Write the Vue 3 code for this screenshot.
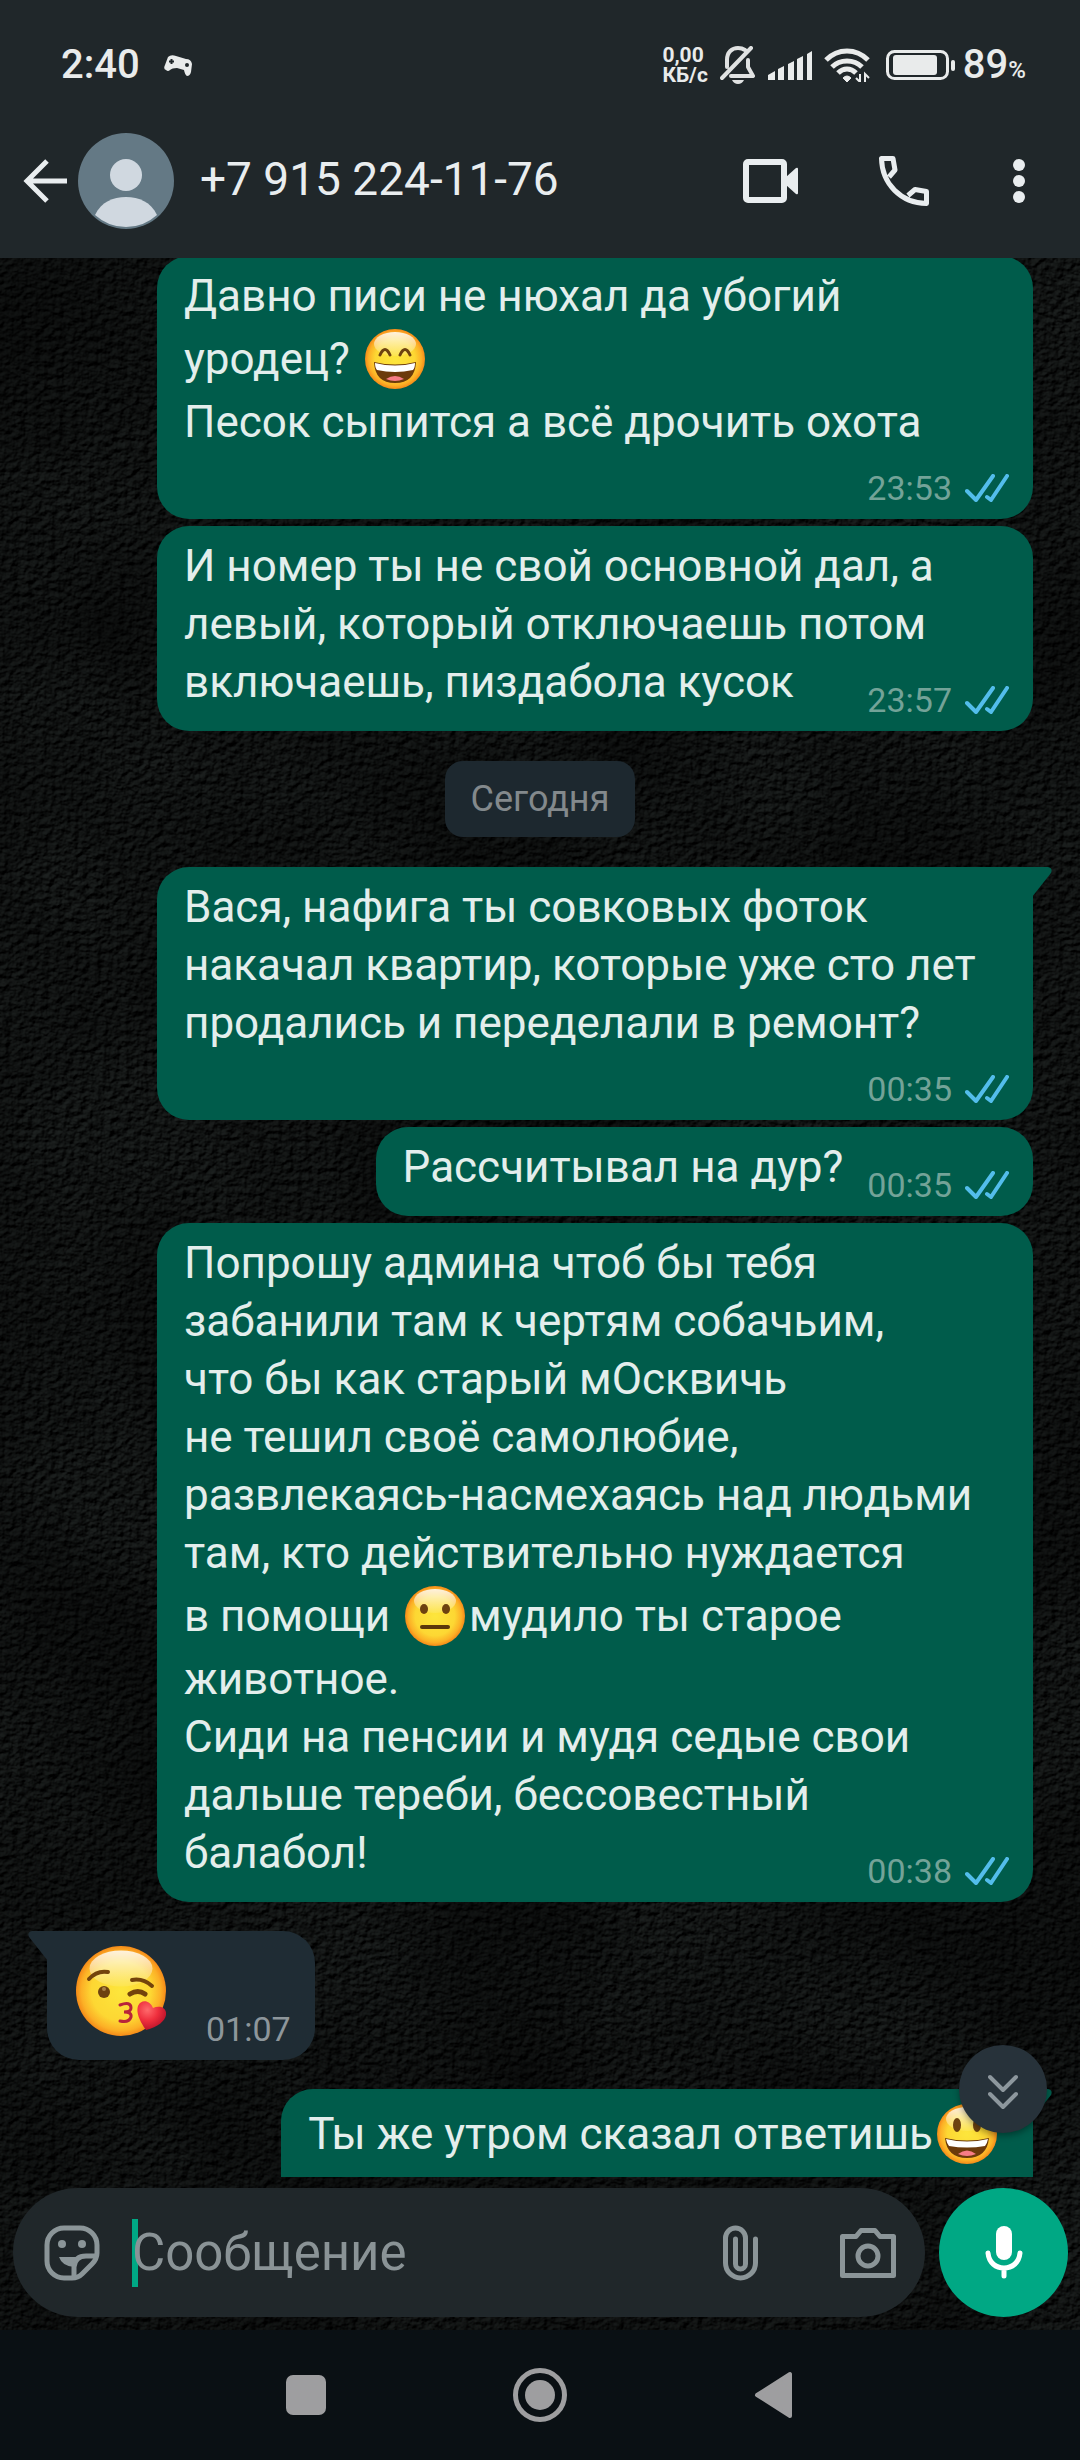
<script setup>
import { ref } from 'vue'

const draft = ref('')

const messages = [
  {
    id: 1,
    wide: true,
    stacked: true,
    time: '23:53',
    lines: [
      ['Давно писи не нюхал да убогий'],
      ['уродец? ', { emoji: 'grin' }],
      ['Песок сыпится а всё дрочить охота'],
    ],
  },
  {
    id: 2,
    wide: true,
    time: '23:57',
    lines: [
      ['И номер ты не свой основной дал, а'],
      ['левый, который отключаешь потом'],
      ['включаешь, пиздабола кусок'],
    ],
  },
  { id: 3, date: 'Сегодня' },
  {
    id: 4,
    wide: true,
    stacked: true,
    tail: true,
    time: '00:35',
    lines: [
      ['Вася, нафига ты совковых фоток'],
      ['накачал квартир, которые уже сто лет'],
      ['продались и переделали в ремонт?'],
    ],
  },
  { id: 5, row: true, time: '00:35', lines: [['Рассчитывал на дур?']] },
  {
    id: 6,
    wide: true,
    time: '00:38',
    lines: [
      ['Попрошу админа чтоб бы тебя'],
      ['забанили там к чертям собачьим,'],
      ['что бы как старый мОсквичь'],
      ['не тешил своё самолюбие,'],
      ['развлекаясь-насмехаясь над людьми'],
      ['там, кто действительно нуждается'],
      ['в помощи ', { emoji: 'neutral' }, 'мудило ты старое'],
      ['животное.'],
      ['Сиди на пенсии и мудя седые свои'],
      ['дальше тереби, бессовестный'],
      ['балабол!'],
    ],
  },
  { id: 7, incoming: true, tail: true, row: true, time: '01:07', lines: [[{ emoji: 'kiss' }]] },
  {
    id: 8,
    tail: true,
    stacked: true,
    lines: [['Ты же утром сказал ответишь', { emoji: 'happy' }]],
  },
]
</script>

<template>
  <div class="phone">
    <svg class="defs" aria-hidden="true">
      <defs>
        <radialGradient id="face" cx="50%" cy="50%" r="50%">
          <stop offset="0" stop-color="#fde63c" />
          <stop offset="0.66" stop-color="#fdd733" />
          <stop offset="0.88" stop-color="#fcb026" />
          <stop offset="1" stop-color="#f58a18" />
        </radialGradient>
        <linearGradient id="shine" x1="0" y1="0" x2="0" y2="1">
          <stop offset="0" stop-color="#fff" stop-opacity="0.85" />
          <stop offset="1" stop-color="#fff" stop-opacity="0.1" />
        </linearGradient>
        <radialGradient id="heart" cx="35%" cy="30%" r="75%">
          <stop offset="0" stop-color="#ff6a6c" />
          <stop offset="0.5" stop-color="#ef2f3d" />
          <stop offset="1" stop-color="#b50f28" />
        </radialGradient>
        <symbol id="emoji-base" viewBox="0 0 60 60">
          <circle cx="30" cy="30" r="30" fill="url(#face)" />
          <ellipse cx="30" cy="15" rx="21" ry="12" fill="url(#shine)" />
        </symbol>
        <symbol id="emoji-grin" viewBox="0 0 60 60">
          <use href="#emoji-base" />
          <path d="M15 26q5-11 10 0M35 26q5-11 10 0" fill="none" stroke="#6d4210" stroke-width="3" stroke-linecap="round" />
          <path d="M9 33q21 5 42 0q-1 21-21 21T9 33z" fill="#6b3a0b" />
          <path d="M10 34q20 5 40 0q0 5-2 7q-18 4-36 0q-2-2-2-7z" fill="#fff" />
          <path d="M21 50q9-6 18 0q-9 4-18 0z" fill="#f67c86" />
        </symbol>
        <symbol id="emoji-happy" viewBox="0 0 60 60">
          <use href="#emoji-base" />
          <ellipse cx="20" cy="21" rx="4" ry="7" fill="#6d4210" />
          <ellipse cx="40" cy="21" rx="4" ry="7" fill="#6d4210" />
          <path d="M8 34q22 5 44 0q-2 20-22 20T8 34z" fill="#6b3a0b" />
          <path d="M9 35q21 5 42 0q-1 5-3 7q-18 3-36 0q-2-2-3-7z" fill="#fff" />
          <path d="M21 50q9-7 18 0q-9 4-18 0z" fill="#f67c86" />
        </symbol>
        <symbol id="emoji-neutral" viewBox="0 0 60 60">
          <use href="#emoji-base" />
          <ellipse cx="19" cy="23" rx="4" ry="5" fill="#6d4210" />
          <ellipse cx="41" cy="23" rx="4" ry="5" fill="#6d4210" />
          <rect x="15" y="39" width="30" height="4" rx="2" fill="#5c380b" />
        </symbol>
        <symbol id="emoji-kiss" viewBox="0 0 90 90">
          <use href="#emoji-base" width="90" height="90" />
          <g fill="none" stroke="#73430c" stroke-linecap="round" stroke-width="4">
            <path d="M13 33q8-9 19-7" />
            <path d="M56 34q11-2 20 6" />
            <path d="M54 48q8-5 15 0" stroke-width="5" />
          </g>
          <circle cx="28" cy="46" r="6" fill="#6d4210" />
          <circle cx="28" cy="43" r="2" fill="#a98147" />
          <path d="M44 59q11-4 11 3q0 4-7 4q8 0 7 5q-2 6-11 4" fill="none" stroke="#b8243a" stroke-width="3" stroke-linecap="round" />
          <path d="M70 84C63 74 60 66 62 60c3-7 12-6 15 2c7-3 14 0 13 7c-1 6-8 12-20 15z" fill="url(#heart)" />
        </symbol>
      </defs>
    </svg>

    <header class="top">
      <div class="status">
        <span class="clock">2:40</span>
        <svg class="pad" width="28" height="21" viewBox="0 0 28 21">
          <path d="M4 2Q7-1 12 1l10 3q5 0 6 5l-1 8q-1 4-4 4q-2-1-3-6l-7-2q-5 0-7 2q-2 2-4 0q-3-1-1-5z" fill="#e9ebeb" />
          <path d="M7.500 4v5M5 6.500h5" stroke="#20272a" stroke-width="2" />
          <circle cx="23" cy="10" r="2" fill="#20272a" />
        </svg>
        <span class="speed"><span>0,00</span><span>КБ/с</span></span>
        <svg class="bell" width="36" height="38" viewBox="0 0 36 38" fill="none" stroke="#e0e2e2" stroke-width="4" stroke-linecap="round" stroke-linejoin="round">
          <path d="M2 32L31 2M7 21v-7C7 6 12 2 18 2q4 0 7 2M28 14v7l5 9H11" />
          <path d="M12 34h12q-2 4-6 4t-6-4z" fill="#e0e2e2" stroke="none" />
        </svg>
        <svg class="signal" width="44" height="29" viewBox="0 0 44 29" fill="#e9ebeb">
          <path d="M0 29v-5l7-4v9zM10 29V18l6-3v14zM20 29V13l6-3v19zM29 29V8l6-3v24zM39 29V3l5-3v29z" />
        </svg>
        <svg class="wifi" width="46" height="34" viewBox="0 0 46 34" fill="none" stroke="#e9ebeb" stroke-width="5">
          <path d="M2 12q9-9 21-9t21 9M8 19q6-6 15-6t15 6M14 25q4-4 9-4t9 4" />
          <path d="M19 30q4-4 8 0l-4 4z" fill="#e9ebeb" stroke-width="1" />
          <path d="M36 26v8l-4-4M41 34v-8l4 4" stroke-width="2" />
        </svg>
        <svg class="battery" width="69" height="30" viewBox="0 0 69 30">
          <rect x="1.500" y="1.500" width="60" height="27" rx="7" fill="none" stroke="#e9ebeb" stroke-width="3" />
          <rect x="7" y="5" width="44" height="20" rx="3" fill="#e9ebeb" />
          <rect x="65" y="10" width="4" height="11" rx="2" fill="#e9ebeb" />
        </svg>
        <span class="charge">89<small>%</small></span>
      </div>

      <div class="bar">
        <button class="icon back" aria-label="Назад">
          <svg width="44" height="44" viewBox="0 0 44 44" fill="none" stroke="#e9edef" stroke-width="5">
            <path d="M24 2L4 22l20 20M3 22h41" />
          </svg>
        </button>
        <svg class="avatar" width="96" height="96" viewBox="0 0 96 96">
          <circle cx="48" cy="48" r="48" fill="#647985" />
          <circle cx="48" cy="42" r="16" fill="#d0d8e0" />
          <path d="M17 82c6-13 18-18 31-18s25 5 31 18a46 46 0 0 1-62 0z" fill="#d0d8e0" />
        </svg>
        <h1 class="title">+7 915 224-11-76</h1>
        <button class="icon video" aria-label="Видеозвонок">
          <svg width="56" height="44" viewBox="0 0 56 44">
            <rect x="3" y="3" width="38" height="38" rx="2" fill="none" stroke="#e9edef" stroke-width="6" />
            <path d="M43 18l10-9q2-1 2 1v24q0 2-2 1l-10-9z" fill="#e9edef" />
          </svg>
        </button>
        <button class="icon call" aria-label="Позвонить">
          <svg width="50" height="50" viewBox="0 0 50 50" fill="none" stroke="#e9edef" stroke-width="5" stroke-linejoin="round">
            <path d="M10 21l6-7-2-11.500H2.500C3 28 22 47 47.500 47.500V35.500L36 33.500l-7 6" />
          </svg>
        </button>
        <button class="icon more" aria-label="Ещё">
          <svg width="12" height="44" viewBox="0 0 12 44" fill="#e9edef">
            <circle cx="6" cy="6" r="6" /><circle cx="6" cy="22" r="6" /><circle cx="6" cy="38" r="6" />
          </svg>
        </button>
      </div>
    </header>

    <main class="chat">
      <svg class="wallpaper" aria-hidden="true">
        <filter id="stone" x="0" y="0" width="100%" height="100%" color-interpolation-filters="sRGB">
          <feTurbulence type="fractalNoise" baseFrequency="0.13 0.16" numOctaves="5" seed="23" result="grain" />
          <feDiffuseLighting in="grain" surfaceScale="3" diffuseConstant="1" lighting-color="#1e2221" result="lit">
            <feDistantLight azimuth="235" elevation="34" />
          </feDiffuseLighting>
          <feTurbulence type="fractalNoise" baseFrequency="0.005" numOctaves="4" seed="4" result="clouds" />
          <feColorMatrix in="clouds" type="matrix" values="0 0 0 0 0  0 0 0 0 0  0 0 0 0 0  0.8 0 0 0 -0.2" result="shade" />
          <feMerge>
            <feMergeNode in="lit" />
            <feMergeNode in="shade" />
          </feMerge>
        </filter>
        <rect width="100%" height="100%" filter="url(#stone)" />
      </svg>

      <section class="messages">
        <template v-for="m in messages" :key="m.id">
          <time v-if="m.date" class="date">{{ m.date }}</time>
          <article
            v-else
            class="bubble"
            :class="{ wide: m.wide, row: m.row, incoming: m.incoming, tailed: m.tail, stacked: m.stacked }"
          >
            <svg v-if="m.tail" class="tail" width="20" height="30" viewBox="0 0 20 30">
              <path d="M0 0h16q5 1 3 6L0 30z" />
            </svg>
            <div class="text">
              <p v-for="(line, i) in m.lines" :key="i" class="line">
                <template v-for="(part, j) in line" :key="j">
                  <svg v-if="part.emoji" class="emoji" :class="part.emoji"><use :href="'#emoji-' + part.emoji" /></svg>
                  <span v-else>{{ part }}</span>
                </template>
              </p>
            </div>
            <div class="meta">
              <time v-if="m.time">{{ m.time }}</time>
              <svg v-if="m.time && !m.incoming" width="44" height="28" viewBox="0 0 44 28" fill="none" stroke="#53bdeb" stroke-width="4" stroke-linecap="round" stroke-linejoin="round">
                <path d="M2 17l9 9L28 2M22 23l4 3L42 2" />
              </svg>
            </div>
          </article>
        </template>
      </section>

      <form class="composer" @submit.prevent>
        <button type="button" class="jump" aria-label="Вниз">
          <svg width="30" height="36" viewBox="0 0 30 36" fill="none" stroke="#8d979d" stroke-width="4" stroke-linecap="round" stroke-linejoin="round">
            <path d="M2 3l13 13L28 3M2 20l13 13 13-13" />
          </svg>
        </button>
        <div class="field">
          <button type="button" class="icon" aria-label="Стикеры">
            <svg width="56" height="56" viewBox="0 0 56 56" fill="none" stroke="#8b9598" stroke-width="5">
              <path d="M20 3h16a17 17 0 0 1 17 17v8q0 6-5 11L38 49q-4 4-10 4h-8A17 17 0 0 1 3 36V20A17 17 0 0 1 20 3z" />
              <path d="M30 53V42q1-11 12-11h11" />
              <path d="M15 32h23q-8 3-8 10q-12-1-15-10z" fill="#8b9598" stroke="none" />
              <circle cx="18" cy="19" r="4" fill="#8b9598" stroke="none" />
              <circle cx="38" cy="19" r="4" fill="#8b9598" stroke="none" />
            </svg>
          </button>
          <span class="caret"></span>
          <input v-model="draft" type="text" placeholder="Сообщение" aria-label="Сообщение" />
          <button type="button" class="icon clip" aria-label="Прикрепить">
            <svg width="35" height="56" viewBox="0 0 35 56" fill="none" stroke="#8b9598" stroke-width="5" stroke-linecap="round">
              <path d="M32.500 14v24a15 15 0 0 1-30 0V13a10 10 0 0 1 20 0v26a5 5 0 0 1-10 0V14" />
            </svg>
          </button>
          <button type="button" class="icon" aria-label="Камера">
            <svg width="56" height="50" viewBox="0 0 56 50" fill="none" stroke="#8b9598" stroke-width="5" stroke-linejoin="round">
              <path d="M2.500 8.500H16l5-6h14l5 6h13.500v39h-51z" />
              <circle cx="28" cy="28" r="10" />
            </svg>
          </button>
        </div>
        <button type="button" class="mic" aria-label="Голосовое сообщение">
          <svg width="38" height="53" viewBox="0 0 38 53">
            <rect x="11" width="16" height="34" rx="8" fill="#fff" />
            <path d="M3 27c1 10 8 15 16 15s15-5 16-15M19 42v8" fill="none" stroke="#fff" stroke-width="5" stroke-linecap="round" />
          </svg>
        </button>
      </form>
    </main>

    <nav class="system">
      <button class="icon" aria-label="Недавние">
        <svg width="54" height="54" viewBox="0 0 54 54" fill="#9e9ea0"><rect x="7" y="7" width="40" height="40" rx="7" /></svg>
      </button>
      <button class="icon" aria-label="Домой">
        <svg width="54" height="54" viewBox="0 0 54 54"><circle cx="27" cy="27" r="24.500" fill="none" stroke="#9e9ea0" stroke-width="5" /><circle cx="27" cy="27" r="15" fill="#9e9ea0" /></svg>
      </button>
      <button class="icon" aria-label="Назад">
        <svg width="54" height="54" viewBox="0 0 54 54" fill="#9e9ea0" stroke="#9e9ea0" stroke-width="4" stroke-linejoin="round"><path d="M10 27l33-21v42z" /></svg>
      </button>
    </nav>
  </div>
</template>

<style>
body {
  margin: 0;
  background: #0a1014;
}
</style>

<style scoped>
.phone {
  display: flex;
  flex-direction: column;
  height: 100vh;
  font-family: Roboto, "Noto Sans", sans-serif;
  color: #e9edef;
}
.phone * {
  box-sizing: border-box;
}
.phone svg {
  display: block;
  flex: none;
}
.phone .defs {
  position: absolute;
  width: 0;
  height: 0;
}
.icon,
.mic,
.jump {
  display: grid;
  place-items: center;
  flex: none;
  padding: 0;
  border: 0;
  background: none;
}

.top {
  flex: none;
  background: #20272a;
}
.status {
  display: flex;
  align-items: center;
  height: 128px;
  padding: 2px 54px 0 61px;
  color: #e9ebeb;
}
.clock,
.charge {
  font-size: 40px;
  line-height: 48px;
  font-weight: 500;
}
.pad {
  margin: 0 auto 0 24px;
}
.speed {
  display: flex;
  flex-direction: column;
  font-size: 21px;
  line-height: 20px;
  font-weight: 700;
}
.bell {
  margin-left: 12px;
}
.signal {
  margin-left: 12px;
}
.wifi {
  margin-left: 12px;
}
.battery {
  margin: 0 8px 0 16px;
}
.charge small {
  font-size: 24px;
  line-height: 24px;
}
.bar {
  display: flex;
  align-items: center;
  height: 130px;
  padding: 0 55px 24px 23px;
}
.avatar {
  margin-left: 11px;
}
.title {
  flex: 1;
  margin: 0 0 4px 26px;
  font-size: 46px;
  line-height: 58px;
  font-weight: 400;
}
.call {
  margin-left: 80px;
}
.more {
  margin-left: 84px;
}

.chat {
  position: relative;
  display: flex;
  flex: 1;
  flex-direction: column;
  min-height: 0;
  background: #0d100f;
}
.phone .wallpaper {
  position: absolute;
  inset: 0;
  width: 100%;
  height: 100%;
}
.messages {
  position: relative;
  display: flex;
  flex: 1;
  flex-direction: column;
  align-items: flex-end;
  min-height: 0;
  margin-top: -2px;
  padding: 0 47px;
  overflow: hidden;
  clip-path: inset(2px 0 0 0);
}
.bubble {
  position: relative;
  flex: none;
  margin-bottom: 7px;
  padding: 11px 24px 11px 27px;
  border-radius: 32px;
  background: #005c4b;
}
.wide {
  width: calc(100% - 110px);
}
.tailed {
  margin-top: 22px;
  border-top-right-radius: 0;
}
.tail {
  position: absolute;
  top: 0;
  left: 100%;
  margin-left: -1px;
  fill: #005c4b;
}
.incoming {
  align-self: flex-start;
  border-radius: 0 32px 32px 32px;
  background: #1f2c34;
}
.incoming .tail {
  right: 100%;
  left: auto;
  margin: 0 -1px 0 0;
  fill: #1f2c34;
  transform: scaleX(-1);
}
.line {
  display: flex;
  align-items: center;
  margin: 0;
  color: #e3eeec;
  font-size: 44px;
  line-height: 58px;
  white-space: pre;
}
.emoji {
  width: 60px;
  height: 60px;
  margin: 4px;
}
.emoji:last-child {
  margin-right: 12px;
}
.emoji.kiss {
  width: 90px;
  height: 90px;
  margin: 4px 2px;
}
.meta {
  display: flex;
  align-items: center;
  justify-content: flex-end;
  gap: 13px;
  height: 40px;
  margin-top: -31px;
  color: #73a398;
  font-size: 34px;
  line-height: 40px;
}
.stacked .meta {
  margin-top: 17px;
}
.row {
  display: flex;
  align-items: flex-end;
  gap: 24px;
}
.row .text {
  margin-bottom: 9px;
}
.row .meta {
  margin-top: 0;
}
.incoming .meta {
  margin-left: 14px;
  color: #8d969b;
}
.date {
  align-self: center;
  flex: none;
  margin: 23px 0 8px;
  padding: 14px 26px;
  border-radius: 18px;
  background: #1d282f;
  color: #83898c;
  font-size: 36px;
  line-height: 48px;
}

.composer {
  position: relative;
  display: flex;
  flex: none;
  gap: 14px;
  padding: 11px 12px 13px 13px;
}
.jump {
  position: absolute;
  right: 33px;
  bottom: 197px;
  width: 88px;
  height: 88px;
  padding-top: 6px;
  border-radius: 50%;
  background: #27323a;
  box-shadow: 0 3px 6px rgb(0 0 0 / 35%);
}
.field {
  display: flex;
  flex: 1;
  align-items: center;
  min-width: 0;
  height: 129px;
  padding: 0 29px 0 31px;
  border-radius: 65px;
  background: #20272a;
}
.caret {
  flex: none;
  width: 6px;
  height: 68px;
  margin: 0 -6px 0 32px;
  background: #00a884;
}
.field input {
  position: relative;
  flex: 1;
  min-width: 0;
  padding: 0;
  border: 0;
  outline: 0;
  background: none;
  color: #e9edef;
  font-family: inherit;
  font-size: 51px;
  line-height: 60px;
}
.field input::placeholder {
  color: #8a9396;
  opacity: 1;
}
.clip {
  margin-right: 82px;
}
.mic {
  width: 129px;
  height: 129px;
  border-radius: 50%;
  background: #00a884;
}

.system {
  display: flex;
  flex: none;
  align-items: center;
  justify-content: center;
  gap: 180px;
  height: 130px;
  background: #0a1014;
}
</style>
